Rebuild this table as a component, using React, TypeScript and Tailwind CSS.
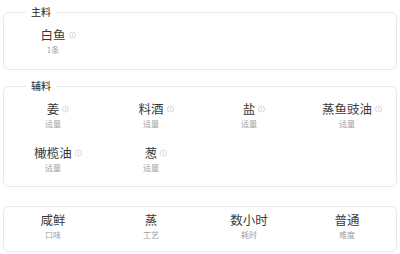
import React from "react";

interface Item {
  name: string;
  sub: string;
  info?: boolean;
}

const main: Item[] = [{ name: "白鱼", sub: "1条", info: true }];

const aux: Item[] = [
  { name: "姜", sub: "适量", info: true },
  { name: "料酒", sub: "适量", info: true },
  { name: "盐", sub: "适量", info: true },
  { name: "蒸鱼豉油", sub: "适量", info: true },
  { name: "橄榄油", sub: "适量", info: true },
  { name: "葱", sub: "适量", info: true },
];

const meta: Item[] = [
  { name: "咸鲜", sub: "口味" },
  { name: "蒸", sub: "工艺" },
  { name: "数小时", sub: "耗时" },
  { name: "普通", sub: "难度" },
];

function InfoDot() {
  return (
    <span className="absolute left-full top-1/2 -translate-y-1/2 ml-[3px] w-[7px] h-[7px] rounded-full border border-[#d9d9d9] flex items-center justify-center">
      <span className="block w-px h-[3px] bg-[#d9d9d9]" />
    </span>
  );
}

function Cell({ name, sub, info }: Item) {
  return (
    <div className="flex flex-col items-center">
      <span className="relative text-[12.5px] leading-[16px] text-[#3a3a3a]">
        {name}
        {info && <InfoDot />}
      </span>
      <span className="mt-[2px] text-[8px] leading-[10px] text-[#a0a0a0]">{sub}</span>
    </div>
  );
}

function Group({ title, items, className }: { title?: string; items: Item[]; className?: string }) {
  return (
    <fieldset
      className={`mx-[3px] border border-[#e8e8e8] rounded-[6px] ${className ?? ""}`}
    >
      {title && (
        <legend className="ml-[22px] px-[5px] text-[10px] leading-[12px] text-[#222]">
          {title}
        </legend>
      )}
      <div className="grid grid-cols-4 gap-y-[16px]">
        {items.map((it) => (
          <Cell key={it.name} {...it} />
        ))}
      </div>
    </fieldset>
  );
}

export default function App() {
  return (
    <div
      className="w-[400px] h-[254px] bg-white pt-[6px]"
      style={{ fontFamily: '"Noto Sans CJK SC", "Noto Sans", sans-serif' }}
    >
      <Group title="主料" items={main} className="pt-[9px] pb-[14px]" />
      <Group title="辅料" items={aux} className="mt-[10px] pt-[9px] pb-[13px]" />
      <Group items={meta} className="mt-[19px] pt-[5px] pb-[11px]" />
    </div>
  );
}
